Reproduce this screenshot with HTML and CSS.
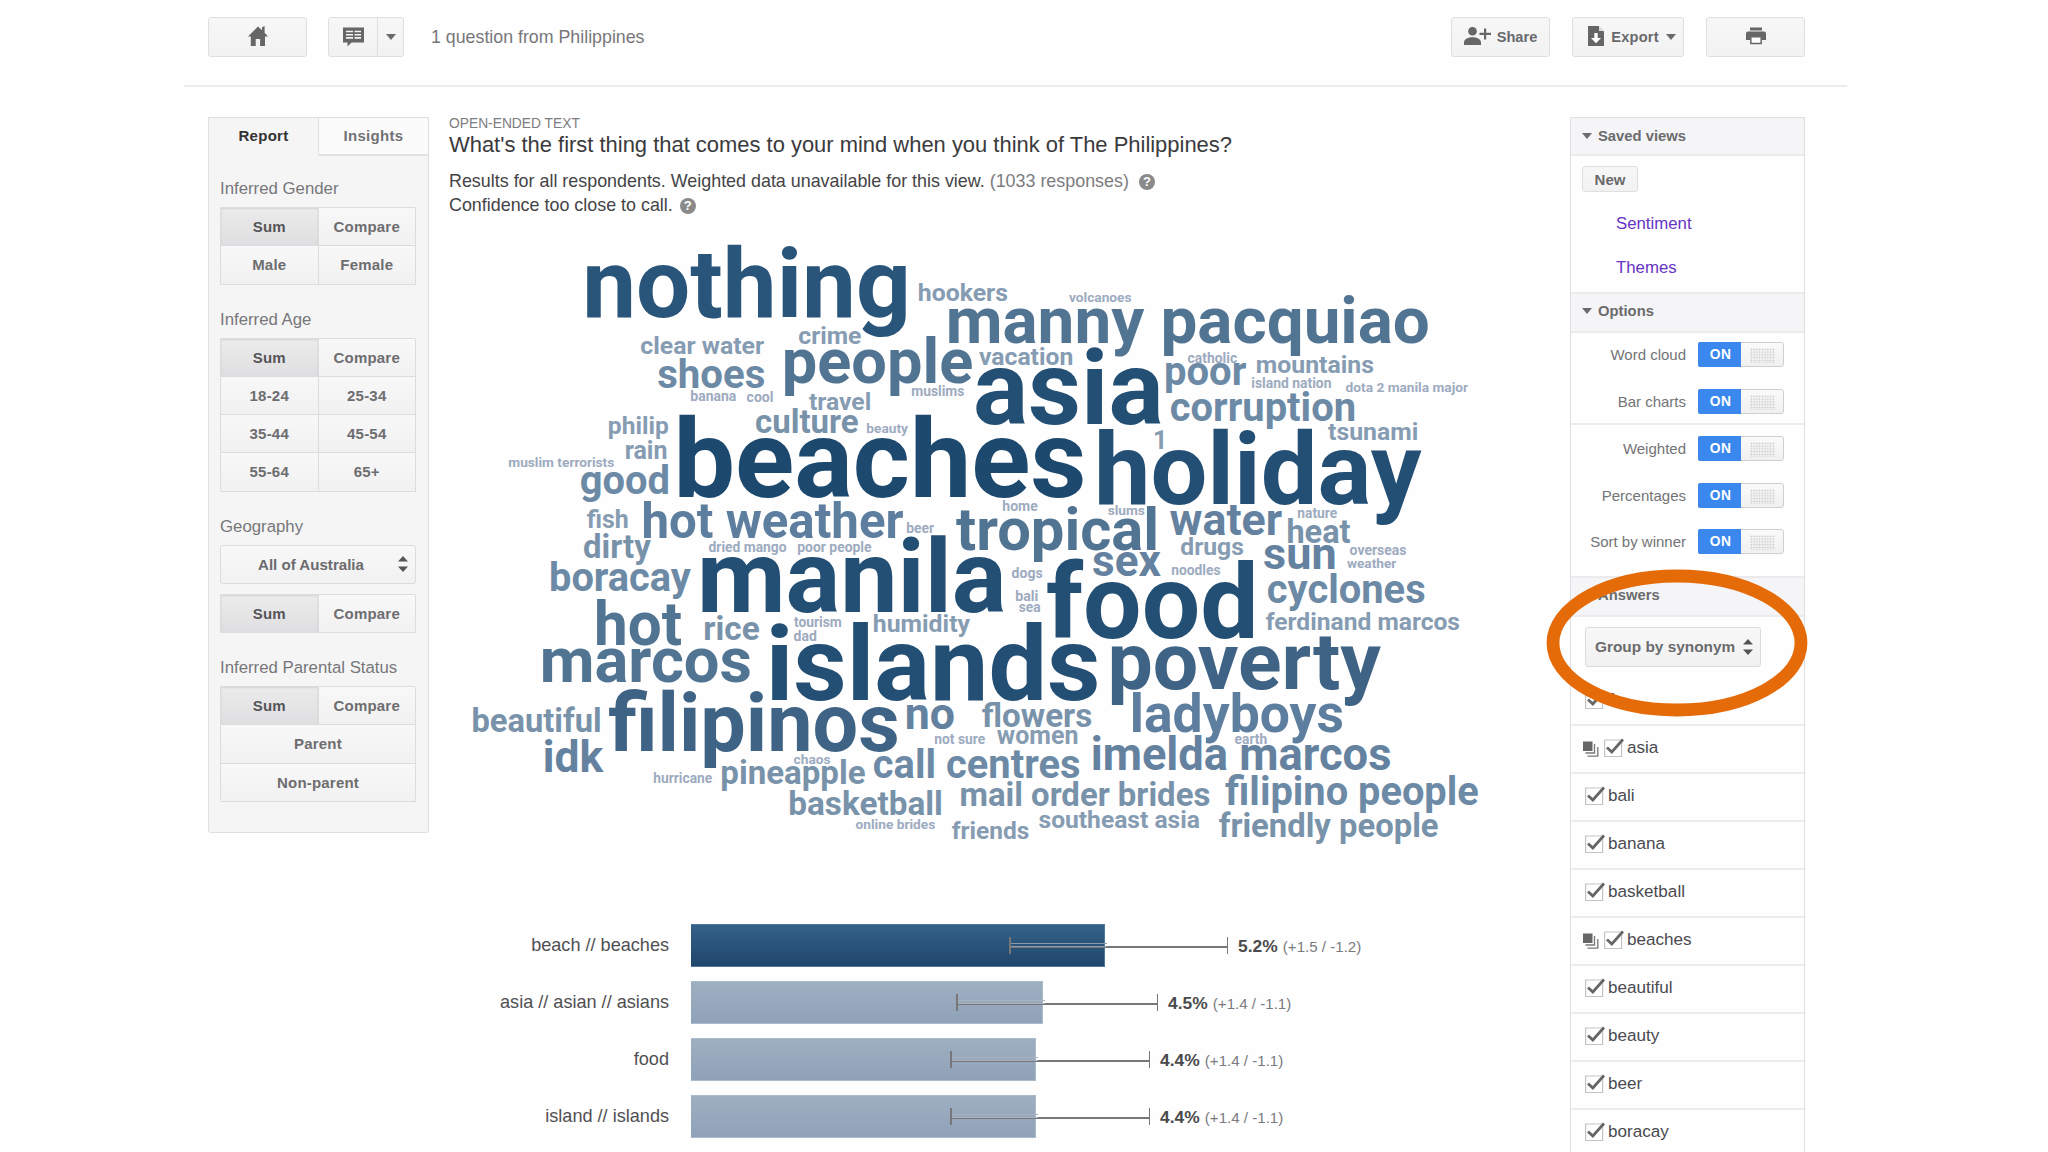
FILE: index.html
```html
<!DOCTYPE html>
<html lang="en">
<head>
    <meta charset="UTF-8">
    <meta name="viewport" content="width=device-width, initial-scale=1.0">
    <title>1 question from Philippines</title>
    <link rel="stylesheet" href="styles.css">
</head>
<body>
    <div class="page">
        <header class="toolbar">
            <button class="btn btn-wide">
                <svg width="20" height="20" viewBox="0 0 20 20"><path d="M10 0.5L0 10.5h2.8V20h4.9v-7h4.400v7h4.900v-9.500h3L16.600 6.800V0l-2.600 1.200v3.100z" fill="#666"/></svg>
            </button>
            <div class="split">
                <button class="btn split-main">
                    <svg width="21" height="20" viewBox="0 0 21 20"><path d="M0 0.500h21v15H8.500L4.500 19.500v-4H0z" fill="#666"/><path d="M3 4.500h7M3 7.700h7M3 10.900h7M11.500 4.500h6.500M11.500 7.700h6.500M11.500 10.900h6.500" stroke="#f5f5f5" stroke-width="1.600"/></svg>
                </button>
                <button class="btn split-arrow"><span class="caret"></span></button>
            </div>
            <span class="survey-name">1 question from Philippines</span>
            <div class="actions">
                <button class="btn btn-share">
                    <svg width="27" height="18" viewBox="0 0 27 18"><circle cx="8.500" cy="4.300" r="4.300" fill="#666"/><path d="M0 18v-2.500C0 12 4.500 10.300 8.500 10.300s8.500 1.700 8.500 5.200V18zM20 1.500h2.200v4.300H27v2.300h-4.800v4.400H20V8.100h-4.500V5.800H20z" fill="#666"/></svg>
                    Share
                </button>
                <button class="btn btn-export">
                    <svg width="16" height="20" viewBox="0 0 16 20"><path d="M0 0h10.500L16 5.500V20H0z" fill="#666"/><path d="M11 0v5h5z" fill="#ddd"/><path d="M6.300 7h3.400v5h3.300L8 17.300 3 12h3.300z" fill="#fff"/></svg>
                    Export <span class="caret"></span>
                </button>
                <button class="btn btn-wide">
                    <svg width="20" height="18" viewBox="0 0 20 18"><path d="M4 0.500h12v3H4zM2 4.500h16a2 2 0 0 1 2 2v6.500h-4V9.500H4V13H0V6.500a2 2 0 0 1 2-2z" fill="#666"/><path d="M4.800 9.800h10.400v6.700H4.800z" fill="#fff" stroke="#666" stroke-width="1.500"/></svg>
                </button>
            </div>
        </header>

        <div class="content">
            <aside class="filters">
                <div class="tabs">
                    <div class="tab active">Report</div>
                    <div class="tab">Insights</div>
                </div>
                <section>
                    <h3>Inferred Gender</h3>
                    <div class="choices">
                        <span class="on">Sum</span><span>Compare</span>
                        <span>Male</span><span>Female</span>
                    </div>
                </section>
                <section>
                    <h3>Inferred Age</h3>
                    <div class="choices">
                        <span class="on">Sum</span><span>Compare</span>
                        <span>18-24</span><span>25-34</span>
                        <span>35-44</span><span>45-54</span>
                        <span>55-64</span><span>65+</span>
                    </div>
                </section>
                <section>
                    <h3>Geography</h3>
                    <div class="select">
                        <span>All of Australia</span>
                        <svg width="10" height="16" viewBox="0 0 10 16"><path d="M5 0l5 5.500H0zM5 16l5-5.500H0z" fill="#555"/></svg>
                    </div>
                    <div class="choices">
                        <span class="on">Sum</span><span>Compare</span>
                    </div>
                </section>
                <section>
                    <h3>Inferred Parental Status</h3>
                    <div class="choices">
                        <span class="on">Sum</span><span>Compare</span>
                        <span class="full">Parent</span>
                        <span class="full">Non-parent</span>
                    </div>
                </section>
            </aside>

            <main class="report">
                <div class="kind">OPEN-ENDED TEXT</div>
                <h1>What's the first thing that comes to your mind when you think of The Philippines?</h1>
                <p class="note first">Results for all respondents. Weighted data unavailable for this view. <span class="count">(1033 responses)</span> <span class="help">?</span></p>
                <p class="note">Confidence too close to call. <span class="help near">?</span></p>

                <svg id="cloud" class="cloud" viewBox="449 230 1059 640"></svg>

                <div class="chart">
                    <div class="row">
                        <div class="name">beach // beaches</div>
                        <div class="track" style="width: 537px">
                            <div class="bar top" style="width: 414px"></div>
                            <div class="whisker" style="left: 318px"><i style="width: 96px"></i></div>
                        </div>
                        <div class="value"><b>5.2%</b> (+1.5 / -1.2)</div>
                    </div>
                    <div class="row">
                        <div class="name">asia // asian // asians</div>
                        <div class="track" style="width: 467px">
                            <div class="bar" style="width: 352px"></div>
                            <div class="whisker" style="left: 265px"><i style="width: 87px"></i></div>
                        </div>
                        <div class="value"><b>4.5%</b> (+1.4 / -1.1)</div>
                    </div>
                    <div class="row">
                        <div class="name">food</div>
                        <div class="track" style="width: 459px">
                            <div class="bar" style="width: 345px"></div>
                            <div class="whisker" style="left: 259px"><i style="width: 86px"></i></div>
                        </div>
                        <div class="value"><b>4.4%</b> (+1.4 / -1.1)</div>
                    </div>
                    <div class="row">
                        <div class="name">island // islands</div>
                        <div class="track" style="width: 459px">
                            <div class="bar" style="width: 345px"></div>
                            <div class="whisker" style="left: 259px"><i style="width: 86px"></i></div>
                        </div>
                        <div class="value"><b>4.4%</b> (+1.4 / -1.1)</div>
                    </div>
                </div>
            </main>

            <aside class="side">
                <h2><span class="caret"></span>Saved views</h2>
                <div class="views">
                    <button class="btn btn-new">New</button>
                    <a>Sentiment</a>
                    <a>Themes</a>
                </div>
                <h2><span class="caret"></span>Options</h2>
                <div class="options">
                    <div class="option">Word cloud <span class="switch"><b>ON</b><i></i></span></div>
                    <div class="option">Bar charts <span class="switch"><b>ON</b><i></i></span></div>
                </div>
                <div class="options last">
                    <div class="option">Weighted <span class="switch"><b>ON</b><i></i></span></div>
                    <div class="option">Percentages <span class="switch"><b>ON</b><i></i></span></div>
                    <div class="option">Sort by winner <span class="switch"><b>ON</b><i></i></span></div>
                </div>
                <h2><span class="caret"></span>Answers</h2>
                <div class="group-by">
                    <div class="select">
                        <span>Group by synonym</span>
                        <svg width="10" height="16" viewBox="0 0 10 16"><path d="M5 0l5 5.500H0zM5 16l5-5.500H0z" fill="#555"/></svg>
                    </div>
                </div>
                <ul id="answers" class="answers"></ul>
                <svg class="ring" width="262" height="148" viewBox="0 0 262 148"><ellipse cx="131" cy="74" rx="124" ry="67" fill="none" stroke="#e56b09" stroke-width="12.800"/></svg>
            </aside>
        </div>
    </div>

    <script>
        // [word, x, baseline, font size]
        const words = [
            ['nothing', 582.2, 317.3, 96.1], ['clear water', 640.3, 354, 24.8], ['crime', 798.3, 344.3, 24.7],
            ['shoes', 657.2, 388, 40.2], ['people', 781.8, 382.7, 63.1], ['banana', 690.3, 401, 14],
            ['cool', 746.6, 402, 14], ['muslims', 911.3, 395.7, 13.8], ['travel', 809, 410.3, 24.7],
            ['culture', 755, 433, 33], ['beauty', 866.3, 432.7, 13.7], ['philip', 607.8, 434, 24.6],
            ['rain', 624.7, 459.3, 25], ['muslim terrorists', 508.3, 467, 13.7], ['good', 579.8, 494, 39.9],
            ['beaches', 673.5, 497, 109.5], ['fish', 586.7, 528.3, 25], ['hot weather', 641.5, 537.7, 49.2],
            ['beer', 906.3, 532.7, 13.8], ['dirty', 583, 558.3, 32.9], ['dried mango', 708.6, 552, 13.8],
            ['poor people', 797.3, 552, 13.9], ['boracay', 549, 591, 39.8], ['manila', 696.9, 611.7, 102.3],
            ['hot', 594, 645, 60.2], ['rice', 703.3, 640.3, 33.3], ['tourism', 794, 627.3, 13.8],
            ['dad', 793.6, 641, 14], ['humidity', 872.8, 632.3, 24.8], ['marcos', 539.8, 681.7, 63.2],
            ['islands', 765.8, 699.7, 104.1], ['filipinos', 608.2, 750.7, 80.9], ['no', 904.8, 729.3, 44.7],
            ['beautiful', 471.4, 732.3, 32.7], ['idk', 542.8, 772, 44.4], ['not sure', 934.3, 744, 13.8],
            ['chaos', 793.6, 764.3, 13.7], ['pineapple', 720.3, 784.3, 33.1], ['hurricane', 653.3, 783.3, 13.8],
            ['call centres', 872.8, 777.7, 39.9], ['basketball', 788.3, 814.7, 33.3], ['online brides', 855.6, 828.7, 13.7],
            ['hookers', 917.8, 300.7, 24.8], ['volcanoes', 1069, 302.3, 13.7], ['manny pacquiao', 945.7, 343, 65.6],
            ['vacation', 979, 365, 24.7], ['asia', 972.9, 423.7, 103.2], ['catholic', 1187.6, 362.7, 13.9],
            ['poor', 1164, 385.3, 40], ['mountains', 1255.8, 373.3, 24.8], ['island nation', 1251.3, 387.7, 13.9],
            ['dota 2 manila major', 1345.6, 392, 13.7], ['corruption', 1169.8, 421, 39.9], ['tsunami', 1328, 440, 24.8],
            ['1', 1153, 448.7, 25], ['holiday', 1094, 503.7, 100.8], ['home', 1002.3, 510.7, 14],
            ['slums', 1107.7, 514.7, 13.7], ['tropical', 956, 550.3, 59.7], ['water', 1169.6, 534.7, 44.8],
            ['nature', 1297.3, 517.7, 13.8], ['heat', 1286.4, 543, 32.5], ['drugs', 1180.3, 555.3, 24.7],
            ['sex', 1092.1, 575.7, 44], ['sun', 1263.1, 569, 45], ['overseas', 1349.6, 554.7, 14],
            ['weather', 1346.9, 568, 13.7], ['noodles', 1171.3, 575, 13.8], ['dogs', 1011.6, 577.7, 14],
            ['bali', 1015.3, 601, 14.2], ['sea', 1018.7, 611.7, 13.8], ['food', 1046, 637.7, 103.7],
            ['cyclones', 1266.8, 603.3, 39.9], ['ferdinand marcos', 1265.8, 629.7, 24.6], ['poverty', 1107.5, 688.7, 80.6],
            ['flowers', 981.7, 726.7, 33.2], ['women', 996.8, 744.3, 25], ['ladyboys', 1129.8, 732.3, 53.5],
            ['earth', 1234.6, 743.7, 13.8], ['imelda marcos', 1090.7, 770.3, 45.3], ['mail order brides', 959.4, 806.3, 32.9],
            ['filipino people', 1225.1, 805, 39.8], ['southeast asia', 1038.5, 828.3, 24.6], ['friends', 951.8, 838.7, 24.5],
            ['friendly people', 1218.7, 837.3, 32.8]
        ];
        const shades = [[105, '#1d496f'], [98, '#244f74'], [90, '#2a557a'], [75, '#3f6385'], [55, '#527493'],
            [47, '#5d7e9e'], [43, '#6482a0'], [38, '#6c8aa5'], [30, '#7892aa'], [20, '#869cb2'], [0, '#9dabc0']];

        const cloud = document.getElementById('cloud');
        words.forEach(([word, x, y, size]) => {
            const text = document.createElementNS('http://www.w3.org/2000/svg', 'text');
            text.setAttribute('x', x);
            text.setAttribute('y', y);
            text.setAttribute('font-size', size);
            text.setAttribute('fill', shades.find(s => size >= s[0])[1]);
            text.textContent = word;
            cloud.appendChild(text);
        });

        const answers = ['1', 'asia', 'bali', 'banana', 'basketball', 'beaches', 'beautiful', 'beauty', 'beer', 'boracay'];
        const grouped = ['asia', 'beaches'];
        const stack = '<svg class="stack" width="16" height="16" viewBox="0 0 16 16"><path d="M0 0.500h9.500V10H0z" fill="#666"/><path d="M11.500 3v9H2.500M14.800 6v9.200H4.500" fill="none" stroke="#777" stroke-width="1.300"/></svg>';
        const check = '<svg class="check" width="20" height="20" viewBox="0 0 20 20"><path d="M0.600 2h17v16.500H0.600z" fill="#fff" stroke="#c4c4c6" stroke-width="1.200"/><path d="M3 9.500L7.800 14 19 1.500" fill="none" stroke="#666" stroke-width="2.800"/></svg>';
        document.getElementById('answers').innerHTML = answers.map(name =>
            `<li>${grouped.includes(name) ? stack : ''}${check}<span>${name}</span></li>`).join('');
    </script>
</body>
</html>
```
FILE: styles.css
```css
* {
    box-sizing: border-box;
}

body {
    margin: 0;
    background: #fefefe;
    color: #3c3c3e;
    font-family: "Liberation Sans", Arial, sans-serif;
    font-size: 17px;
}

h1, h2, h3, p, ul {
    margin: 0;
    padding: 0;
    font-weight: normal;
}

.page {
    width: 1663px;
    margin-left: 184px;
}

.toolbar {
    display: flex;
    align-items: center;
    height: 87px;
    padding: 0 42px 11px 24px;
    border-bottom: 2px solid #ececee;
}

.btn {
    display: flex;
    align-items: center;
    justify-content: center;
    height: 40px;
    padding: 0;
    border: 1.5px solid #dfdfe1;
    border-radius: 3px;
    background: linear-gradient(#f7f7f8, #f2f2f3);
    color: #69696b;
    font: bold 14.6px "Liberation Sans", Arial, sans-serif;
}

.btn-wide {
    width: 99px;
}

.btn-wide svg {
    margin-bottom: 3px;
}

.caret {
    display: inline-block;
    border: 5px solid transparent;
    border-top: 6px solid #6b6b6d;
    border-bottom: 0;
}

.split {
    display: flex;
    margin-left: 21px;
}

.split-main {
    width: 50px;
    border-radius: 3px 0 0 3px;
}

.split-arrow {
    width: 27px;
    margin-left: -1px;
    border-radius: 0 3px 3px 0;
}

.survey-name {
    margin-left: 27px;
    color: #777779;
    font-size: 17.8px;
}

.actions {
    display: flex;
    gap: 22px;
    margin-left: auto;
}

.btn-share {
    width: 99px;
    gap: 6px;
}

.btn-share svg {
    margin-bottom: 3px;
}

.btn-export {
    width: 112px;
    gap: 7px;
    padding-left: 8px;
    letter-spacing: 0.2px;
}

.btn-export svg {
    margin-bottom: 3px;
}

.content {
    display: flex;
    align-items: flex-start;
    padding: 30px 42px 0 24px;
}

/* left column */
.filters {
    width: 221px;
    height: 716px;
    border: 1.5px solid #dfdfe2;
    border-radius: 0 0 3px 3px;
    background: #f5f5f6;
}

.tabs {
    display: flex;
}

.tab {
    flex: 1;
    height: 38px;
    border-bottom: 2px solid #e2e2e4;
    background: #fbfbfb;
    color: #727274;
    font-size: 15px;
    font-weight: bold;
    line-height: 36px;
    text-align: center;
    letter-spacing: 0.3px;
}

.tab.active {
    border-right: 1.5px solid #dfdfe2;
    border-bottom-color: transparent;
    background: none;
    color: #333;
}

.filters section {
    padding: 0 12px 0 11px;
    margin-top: 23px;
}

.tabs + section {
    margin-top: 21px;
}

.filters h3 {
    margin-bottom: 6px;
    color: #777779;
    font-size: 16.8px;
    line-height: 24px;
}

.choices {
    display: grid;
    grid-template-columns: 1fr 1fr;
    border: solid #dcdcde;
    border-width: 1px 0 0 1px;
    border-radius: 2px;
}

.choices span {
    height: 38.3px;
    border: solid #dcdcde;
    border-width: 0 1px 1px 0;
    background: linear-gradient(#f8f8f9, #f1f1f2);
    color: #6d6d6f;
    font-size: 15px;
    font-weight: bold;
    line-height: 37px;
    text-align: center;
    letter-spacing: 0.2px;
}

.choices .on {
    background: linear-gradient(#ebebec, #dfdfe1);
    box-shadow: inset 0 1px 2px rgba(0, 0, 0, 0.1);
    color: #555557;
}

.choices .full {
    grid-column: 1 / 3;
}

.select {
    display: flex;
    align-items: center;
    justify-content: space-between;
    height: 39px;
    padding: 0 7px 0 37px;
    border: 1.5px solid #dcdcde;
    border-radius: 3px;
    background: linear-gradient(#f8f8f9, #f1f1f2);
    color: #6b6b6d;
    font-size: 15.1px;
    font-weight: bold;
}

.select + .choices {
    margin-top: 10px;
}

/* middle column */
.report {
    flex: 1;
    padding-left: 20px;
}

.kind {
    color: #7d7d7f;
    font-size: 13.8px;
    line-height: 14px;
}

h1 {
    color: #3a3a3c;
    font-size: 21.95px;
    line-height: 27px;
}

.note {
    color: #444446;
    font-size: 17.9px;
    line-height: 24px;
}

.note.first {
    margin-top: 11px;
}

.count {
    color: #7c7c7e;
}

.help {
    display: inline-block;
    width: 16px;
    height: 16px;
    margin-left: 5px;
    border-radius: 50%;
    background: #8a8a8a;
    color: #fff;
    font-size: 13px;
    font-weight: bold;
    line-height: 16px;
    text-align: center;
    vertical-align: 1px;
}

.help.near {
    margin-left: 2px;
}

.cloud {
    display: block;
    width: 1059px;
    height: 640px;
    margin-top: 13px;
    font-family: Roboto, sans-serif;
    font-weight: bold;
}

.chart {
    display: flex;
    flex-direction: column;
    gap: 14px;
    margin-top: 54px;
}

.row {
    display: flex;
    align-items: center;
    height: 43px;
}

.name {
    width: 220px;
    margin-right: 22px;
    padding-bottom: 1px;
    color: #505053;
    font-size: 18.1px;
    text-align: right;
}

.track {
    display: flex;
    position: relative;
    height: 43px;
}

.bar {
    border: 1px solid #a9bccc;
    border-left: 0;
    background: linear-gradient(#9fafc2, #8fa2b7);
}

.bar.top {
    border-color: #4f7898;
    background: linear-gradient(#34618a, #20466c);
}

/* confidence interval, the part over the bar has a light outline */
.whisker {
    position: absolute;
    top: 13px;
    right: 0;
    height: 17px;
    border: solid #77777b;
    border-width: 0 1.5px 0 2px;
}

.whisker::before {
    content: "";
    display: block;
    height: 9px;
    border-bottom: 2px solid #77777b;
}

.whisker i {
    position: absolute;
    top: 6px;
    left: 0;
    height: 4px;
    border: solid #a9b3be;
    border-width: 1px 0;
}

.bar.top + .whisker i {
    border-color: #8c98a6;
}

.value {
    margin-left: 10px;
    padding-top: 1px;
    color: #7b7b7e;
    font-size: 15.1px;
}

.value b {
    margin-right: 1px;
    color: #4a4a4c;
    font-size: 17.4px;
}

/* right column */
.side {
    position: relative;
    width: 235px;
    height: 1035px;
    border: 1.5px solid #dfdfe2;
    border-bottom: 0;
    background: #fefefe;
}

.side h2 {
    display: flex;
    align-items: center;
    gap: 6px;
    height: 38px;
    padding: 0 0 1px 11px;
    border-bottom: 2px solid #ebebee;
    background: #f5f5f7;
    color: #6b6b6d;
    font-size: 14.8px;
    font-weight: bold;
}

.side h2:not(:first-child) {
    height: 41px;
    padding-bottom: 3px;
    border-top: 2px solid #ebebee;
}

.views {
    height: 136px;
    padding: 10px 11px;
}

.btn-new {
    width: 56px;
    height: 26px;
    margin-bottom: 20px;
    font-size: 15px;
}

.views a {
    display: block;
    margin: 0 0 20px 34px;
    color: #6633c5;
    font-size: 16.8px;
    line-height: 24px;
}

.options {
    padding-top: 9px;
    height: 92px;
    border-bottom: 2px solid #ebebee;
}

.options.last {
    height: 151px;
    border: 0;
    padding-top: 11px;
}

.option {
    display: flex;
    align-items: center;
    justify-content: flex-end;
    gap: 12px;
    height: 25px;
    margin-bottom: 21.5px;
    padding-right: 20px;
    color: #747476;
    font-size: 15px;
}

.switch {
    display: flex;
    width: 86px;
    height: 25px;
    border: 1.5px solid #cfcfd2;
    border-radius: 3px;
    background: linear-gradient(#fafafa, #f0f0f1);
}

.switch b {
    width: 43px;
    margin: -1px 0 -1px -1px;
    padding-left: 2px;
    border-radius: 2px 0 0 2px;
    background: #3a87ee;
    color: #fff;
    font-size: 13.8px;
    line-height: 25px;
    text-align: center;
    letter-spacing: 0.3px;
}

.switch i {
    width: 25px;
    height: 15px;
    margin: 5px 0 0 9px;
    background: radial-gradient(circle, #c9c9cb 0.8px, transparent 1px) 0 0 / 2.75px 2.75px;
}

.group-by {
    height: 61px;
    padding: 10px 0 0 14px;
}

.group-by .select {
    width: 176px;
    height: 40px;
    padding: 0 7px 0 9px;
    font-size: 15.4px;
}

.answers {
    list-style: none;
}

.answers li {
    display: flex;
    align-items: center;
    height: 48px;
    padding: 0 0 3px 14px;
    border-bottom: 2px solid #ececef;
    color: #4a4a50;
    font-size: 17.1px;
}

.answers li:last-child {
    height: 43px;
    padding-bottom: 0;
    border-bottom: 0;
}

.answers span {
    margin-left: 3px;
}

.stack {
    margin: 3px 5px 0 -2px;
}

/* marker drawn over the grouping select */
.ring {
    position: absolute;
    top: 451px;
    left: -25px;
}
```
